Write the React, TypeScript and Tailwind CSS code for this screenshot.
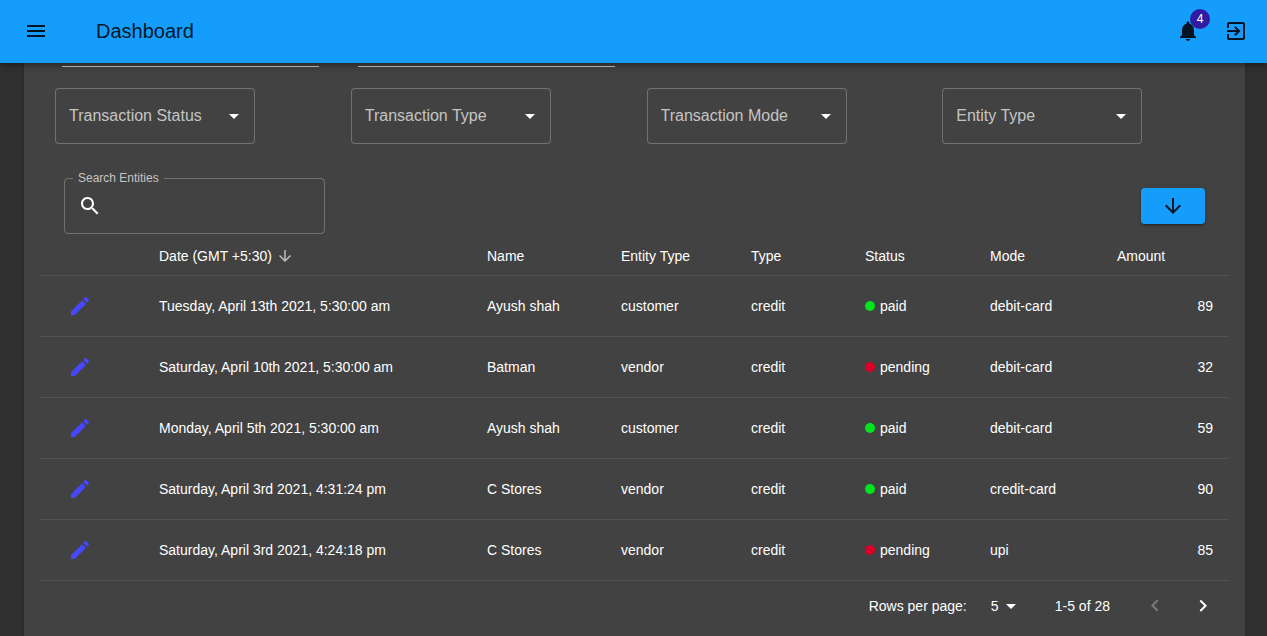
import React, { useState } from "react";

const paths = {
  menu: "M3 18h18v-2H3v2zm0-5h18v-2H3v2zm0-7v2h18V6H3z",
  bell: "M12 22c1.1 0 2-.9 2-2h-4c0 1.1.89 2 2 2zm6-6v-5c0-3.07-1.64-5.64-4.5-6.32V4c0-.83-.67-1.5-1.5-1.5s-1.5.67-1.5 1.5v.68C7.63 5.36 6 7.92 6 11v5l-2 2v1h16v-1l-2-2z",
  exit: "M10.09 15.59L11.5 17l5-5-5-5-1.41 1.41L12.67 11H3v2h9.67l-2.58 2.59zM19 3H5c-1.11 0-2 .9-2 2v4h2V5h14v14H5v-4H3v4c0 1.1.89 2 2 2h14c1.1 0 2-.9 2-2V5c0-1.1-.9-2-2-2z",
  down: "M20 12l-1.41-1.41L13 16.17V4h-2v12.17l-5.58-5.59L4 12l8 8 8-8z",
  edit: "M3 17.25V21h3.75L17.81 9.94l-3.75-3.75L3 17.25zM20.71 7.04c.39-.39.39-1.02 0-1.41l-2.34-2.34c-.39-.39-1.02-.39-1.41 0l-1.83 1.83 3.75 3.75 1.83-1.83z",
  search:
    "M15.5 14h-.79l-.28-.27C15.41 12.59 16 11.11 16 9.5 16 5.91 13.09 3 9.5 3S3 5.91 3 9.5 5.91 16 9.5 16c1.61 0 3.09-.59 4.23-1.57l.27.28v.79l5 4.99L20.49 19l-4.99-5zm-6 0C7.01 14 5 11.99 5 9.5S7.01 5 9.5 5 14 7.01 14 9.5 11.99 14 9.5 14z",
  left: "M15.41 16.09l-4.58-4.59 4.58-4.59L14 5.5l-6 6 6 6z",
  right: "M8.59 16.34l4.58-4.59-4.58-4.59L10 5.75l6 6-6 6z",
  caret: "M7 10l5 5 5-5z",
};

function Icon({ name, className = "size-6" }: { name: keyof typeof paths; className?: string }) {
  return (
    <svg viewBox="0 0 24 24" fill="currentColor" aria-hidden="true" className={`shrink-0 ${className}`}>
      <path d={paths[name]} />
    </svg>
  );
}

type Row = {
  date: string;
  name: string;
  entity: string;
  type: string;
  status: "paid" | "pending";
  mode: string;
  amount: number;
};

const rows: Row[] = [
  { date: "Tuesday, April 13th 2021, 5:30:00 am", name: "Ayush shah", entity: "customer", type: "credit", status: "paid", mode: "debit-card", amount: 89 },
  { date: "Saturday, April 10th 2021, 5:30:00 am", name: "Batman", entity: "vendor", type: "credit", status: "pending", mode: "debit-card", amount: 32 },
  { date: "Monday, April 5th 2021, 5:30:00 am", name: "Ayush shah", entity: "customer", type: "credit", status: "paid", mode: "debit-card", amount: 59 },
  { date: "Saturday, April 3rd 2021, 4:31:24 pm", name: "C Stores", entity: "vendor", type: "credit", status: "paid", mode: "credit-card", amount: 90 },
  { date: "Saturday, April 3rd 2021, 4:24:18 pm", name: "C Stores", entity: "vendor", type: "credit", status: "pending", mode: "upi", amount: 85 },
];

const filters = [
  { label: "Transaction Status", options: ["paid", "pending"] },
  { label: "Transaction Type", options: ["credit", "debit"] },
  { label: "Transaction Mode", options: ["debit-card", "credit-card", "upi"] },
  { label: "Entity Type", options: ["customer", "vendor"] },
];

function TopBar() {
  return (
    <header className="sticky top-0 z-10 flex h-[63px] items-center bg-[#149dfa] px-6 pb-px text-black/87 shadow-[0_2px_4px_-1px_rgba(0,0,0,0.2),0_4px_5px_0_rgba(0,0,0,0.14),0_1px_10px_0_rgba(0,0,0,0.12)]">
      <button type="button" aria-label="Open menu">
        <Icon name="menu" />
      </button>
      <h1 className="ml-12 flex-1 text-xl">Dashboard</h1>
      <div className="-mr-[5px] flex gap-6">
        <button type="button" aria-label="Notifications" className="relative">
          <Icon name="bell" />
          <span className="absolute -top-2.5 -right-2.5 flex size-5 items-center justify-center rounded-full bg-[#311ba2] text-xs text-white">
            4
          </span>
        </button>
        <button type="button" aria-label="Log out">
          <Icon name="exit" />
        </button>
      </div>
    </header>
  );
}

function FilterSelect({ label, options }: { label: string; options: string[] }) {
  return (
    <div className="relative h-14 w-[200px]">
      <select
        aria-label={label}
        defaultValue=""
        className="size-full appearance-none rounded border border-white/25 bg-[#424242] pr-8 pl-[13px] text-base text-white/70"
      >
        <option value="">{label}</option>
        {options.map((o) => (
          <option key={o}>{o}</option>
        ))}
      </select>
      <span className="pointer-events-none absolute inset-y-4 right-[9px]">
        <Icon name="caret" />
      </span>
    </div>
  );
}

function Filters() {
  return (
    <div className="px-[3px]">
      <div className="grid grid-cols-4">
        {["Start date", "End date"].map((label) => (
          <div key={label} className="pl-[19px]">
            <input aria-label={label} className="block h-8 w-[257px] border-b border-white/70 bg-transparent outline-none" />
          </div>
        ))}
      </div>
      <div className="mt-[21px] grid grid-cols-4">
        {filters.map((f) => (
          <div key={f.label} className="pl-3">
            <FilterSelect label={f.label} options={f.options} />
          </div>
        ))}
      </div>
    </div>
  );
}

function Toolbar() {
  return (
    <div className="mt-7 flex items-end justify-between px-6">
      <fieldset className="w-[261px] rounded border border-white/25 pl-2">
        <legend className="px-[5px] text-xs leading-[13px] text-white/70">
          <label htmlFor="search">Search Entities</label>
        </legend>
        <div className="flex h-12 items-center gap-2 pb-1.5 pl-[5px]">
          <Icon name="search" />
          <input id="search" className="min-w-0 flex-1 bg-transparent text-base outline-none" />
        </div>
      </fieldset>
      <button
        type="button"
        aria-label="Download"
        className="mb-2.5 flex h-9 w-16 items-center justify-center rounded bg-[#149dfa] text-black/87 shadow-[0_3px_1px_-2px_rgba(0,0,0,0.2),0_2px_2px_0_rgba(0,0,0,0.14),0_1px_5px_0_rgba(0,0,0,0.12)]"
      >
        <Icon name="down" />
      </button>
    </div>
  );
}

function Transactions() {
  return (
    <table className="mt-1 w-full table-fixed border-collapse text-left text-sm">
      <thead>
        <tr className="h-[37px] border-b border-[#515151] [&>th]:pl-4 [&>th]:font-normal">
          <th className="w-[103px]" aria-label="Edit" />
          <th className="w-[328px]">
            <button type="button" className="flex items-center gap-1">
              Date (GMT +5:30)
              <Icon name="down" className="size-[18px] text-white/65" />
            </button>
          </th>
          <th className="w-[134px]">Name</th>
          <th className="w-[130px]">Entity Type</th>
          <th className="w-[114px]">Type</th>
          <th className="w-[125px]">Status</th>
          <th className="w-[127px]">Mode</th>
          <th className="w-[128px]">Amount</th>
        </tr>
      </thead>
      <tbody>
        {rows.map((r) => (
          <tr key={r.date} className="h-[61px] border-b border-[#515151] [&>td]:pl-4">
            <td>
              <button type="button" aria-label={`Edit ${r.name}`} className="ml-3 block text-[#4747ff]">
                <Icon name="edit" />
              </button>
            </td>
            <td>{r.date}</td>
            <td>{r.name}</td>
            <td>{r.entity}</td>
            <td>{r.type}</td>
            <td>
              <span className="flex items-center gap-[5px]">
                <span className={`size-2.5 rounded-full ${r.status === "paid" ? "bg-[#00e31d]" : "bg-[#dc0028]"}`} />
                {r.status}
              </span>
            </td>
            <td>{r.mode}</td>
            <td className="pr-4 text-right">{r.amount}</td>
          </tr>
        ))}
      </tbody>
    </table>
  );
}

function Pagination() {
  const [size, setSize] = useState("5");
  return (
    <div className="flex h-[50px] items-center justify-end pr-0.5 text-sm">
      <label htmlFor="page-size">Rows per page:</label>
      <div className="relative ml-4 h-6 w-10">
        <select
          id="page-size"
          value={size}
          onChange={(e) => setSize(e.target.value)}
          className="size-full appearance-none bg-[#424242] pl-2"
        >
          <option>5</option>
          <option>10</option>
          <option>25</option>
        </select>
        <span className="pointer-events-none absolute inset-y-0 right-0">
          <Icon name="caret" />
        </span>
      </div>
      <span className="ml-8">1-5 of 28</span>
      <div className="ml-[21px] flex">
        <button type="button" aria-label="Previous page" disabled className="p-3 text-white/30">
          <Icon name="left" />
        </button>
        <button type="button" aria-label="Next page" className="p-3">
          <Icon name="right" />
        </button>
      </div>
    </div>
  );
}

export default function App() {
  return (
    <div className="flex min-h-screen flex-col bg-[#303030] font-['Liberation_Sans',Arial,sans-serif] text-white">
      <TopBar />
      <main className="-mt-7 mr-[22px] ml-6 flex-1 bg-[#424242] px-4 shadow-[0_2px_1px_-1px_rgba(0,0,0,0.2),0_1px_1px_0_rgba(0,0,0,0.14),0_1px_3px_0_rgba(0,0,0,0.12)]">
        <Filters />
        <Toolbar />
        <Transactions />
        <Pagination />
      </main>
    </div>
  );
}
